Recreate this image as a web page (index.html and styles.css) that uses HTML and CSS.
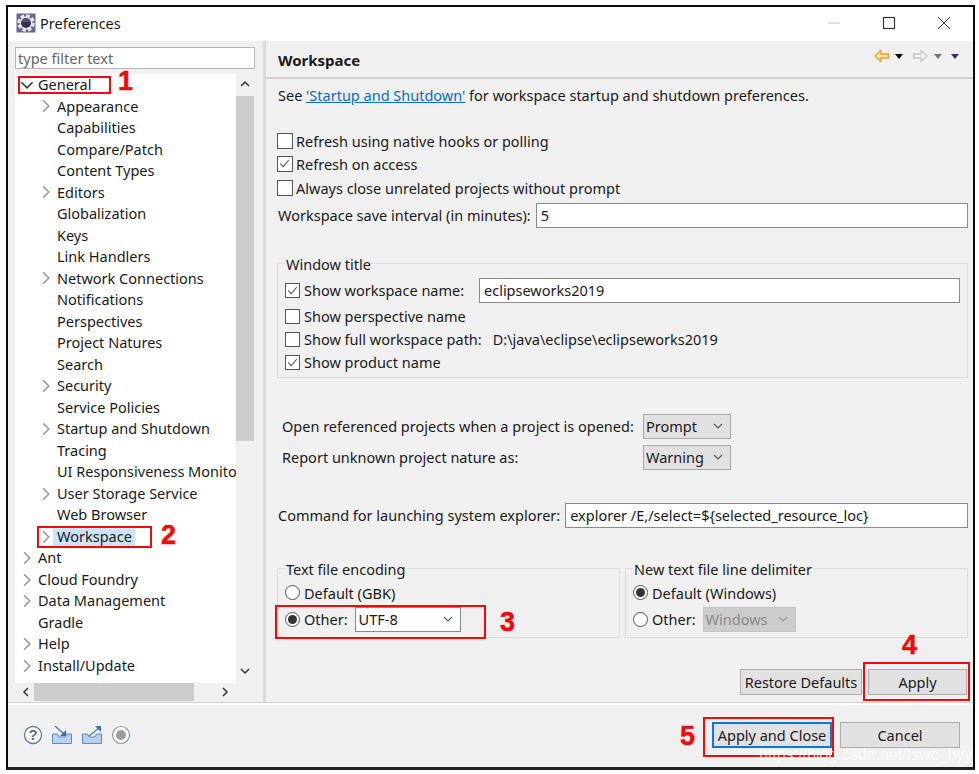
FILE: index.html
```html
<!DOCTYPE html>
<html lang="en">
<head>
<meta charset="utf-8">
<title>Preferences</title>
<link rel="stylesheet" href="styles.css">
</head>
<body>
<div class="window">
  <header class="titlebar">
    <svg class="app-icon" width="20" height="20" viewBox="0 0 20 20"><rect x="0.500" y="0.500" width="19" height="19" fill="#6a6596"/><circle cx="10" cy="10" r="7" fill="none" stroke="#e6e6ee" stroke-width="3.600" stroke-dasharray="3.500 2"/><circle cx="10" cy="10" r="6.500" fill="#eeeef2"/><circle cx="10" cy="10" r="5" fill="#35304f"/><path d="M5.500 9a4.800 4.800 0 0 1 9 0z" fill="#55507a"/></svg>
    <span class="title-text">Preferences</span>
    <div class="win-controls">
      <svg width="14" height="14" viewBox="0 0 14 14"><path d="M1 7h12" stroke="#c4c4c4" fill="none"/></svg>
      <svg width="14" height="14" viewBox="0 0 14 14"><rect x="1.500" y="1.500" width="11" height="11" stroke="#333" fill="none" stroke-width="1.200"/></svg>
      <svg width="14" height="14" viewBox="0 0 14 14"><path d="M1 1l12 12M13 1L1 13" stroke="#333" fill="none"/></svg>
    </div>
  </header>
  <div class="main">
    <aside class="left">
      <input class="filter" value="type filter text">
      <div class="tree-box">
        <ul class="tree">
          <li class="root"><svg class="tw open" viewBox="0 0 10 10"><path d="M1 3l4 4 4-4" /></svg>General</li>
          <li class="sub"><svg class="tw" viewBox="0 0 10 10"><path d="M3 1l4 4-4 4"/></svg>Appearance</li>
          <li class="sub leaf">Capabilities</li>
          <li class="sub leaf">Compare/Patch</li>
          <li class="sub leaf">Content Types</li>
          <li class="sub"><svg class="tw" viewBox="0 0 10 10"><path d="M3 1l4 4-4 4"/></svg>Editors</li>
          <li class="sub leaf">Globalization</li>
          <li class="sub leaf">Keys</li>
          <li class="sub leaf">Link Handlers</li>
          <li class="sub"><svg class="tw" viewBox="0 0 10 10"><path d="M3 1l4 4-4 4"/></svg>Network Connections</li>
          <li class="sub leaf">Notifications</li>
          <li class="sub leaf">Perspectives</li>
          <li class="sub leaf">Project Natures</li>
          <li class="sub leaf">Search</li>
          <li class="sub"><svg class="tw" viewBox="0 0 10 10"><path d="M3 1l4 4-4 4"/></svg>Security</li>
          <li class="sub leaf">Service Policies</li>
          <li class="sub"><svg class="tw" viewBox="0 0 10 10"><path d="M3 1l4 4-4 4"/></svg>Startup and Shutdown</li>
          <li class="sub leaf">Tracing</li>
          <li class="sub leaf">UI Responsiveness Monitoring</li>
          <li class="sub"><svg class="tw" viewBox="0 0 10 10"><path d="M3 1l4 4-4 4"/></svg>User Storage Service</li>
          <li class="sub leaf">Web Browser</li>
          <li class="sub"><svg class="tw" viewBox="0 0 10 10"><path d="M3 1l4 4-4 4"/></svg><span class="selected">Workspace</span></li>
          <li class="root"><svg class="tw" viewBox="0 0 10 10"><path d="M3 1l4 4-4 4"/></svg>Ant</li>
          <li class="root"><svg class="tw" viewBox="0 0 10 10"><path d="M3 1l4 4-4 4"/></svg>Cloud Foundry</li>
          <li class="root"><svg class="tw" viewBox="0 0 10 10"><path d="M3 1l4 4-4 4"/></svg>Data Management</li>
          <li class="root leaf">Gradle</li>
          <li class="root"><svg class="tw" viewBox="0 0 10 10"><path d="M3 1l4 4-4 4"/></svg>Help</li>
          <li class="root"><svg class="tw" viewBox="0 0 10 10"><path d="M3 1l4 4-4 4"/></svg>Install/Update</li>
        </ul>
        <div class="vscroll">
          <svg class="sb-arrow" viewBox="0 0 10 10"><path d="M1 7l4-4 4 4"/></svg>
          <div class="vtrack"><div class="vthumb"></div></div>
          <svg class="sb-arrow" viewBox="0 0 10 10"><path d="M1 3l4 4 4-4"/></svg>
        </div>
      </div>
      <div class="hscroll">
        <svg class="sb-arrow" viewBox="0 0 10 10"><path d="M7 1L3 5l4 4"/></svg>
        <div class="htrack"><div class="hthumb"></div></div>
        <svg class="sb-arrow" viewBox="0 0 10 10"><path d="M3 1l4 4-4 4"/></svg>
      </div>
    </aside>
    <section class="right">
      <div class="page-head">
        <h1>Workspace</h1>
        <div class="nav-icons">
          <svg class="nav-back" width="16" height="14" viewBox="0 0 16 14"><path d="M1 7l6-5.500V5h7.500v4H7v3.500z" fill="#fde89a" stroke="#dca23c" stroke-width="1.300"/></svg>
          <i class="tri black"></i>
          <svg class="nav-fwd" width="16" height="14" viewBox="0 0 16 14"><path d="M15 7L9 1.500V5H1.500v4H9v3.500z" fill="#f4f4f4" stroke="#c8c8c8" stroke-width="1.300"/></svg>
          <i class="tri grey"></i>
          <i class="tri purple"></i>
        </div>
      </div>
      <div class="page">
        <p class="see">See <a href="#">'Startup and Shutdown'</a> for workspace startup and shutdown preferences.</p>
        <div class="checks first">
          <label class="cb-row"><span class="cb"></span>Refresh using native hooks or polling</label>
          <label class="cb-row"><span class="cb on"><svg viewBox="0 0 14 14"><path d="M2.500 7l3 3.500 6-7"/></svg></span>Refresh on access</label>
          <label class="cb-row"><span class="cb"></span>Always close unrelated projects without prompt</label>
        </div>
        <div class="field-row save"><span>Workspace save interval (in minutes):</span><div class="text-input grow">5</div></div>

        <fieldset class="group wt">
          <legend>Window title</legend>
          <div class="field-row name">
            <label class="cb-row w"><span class="cb on"><svg viewBox="0 0 14 14"><path d="M2.500 7l3 3.500 6-7"/></svg></span>Show workspace name:</label>
            <div class="text-input grow">eclipseworks2019</div>
          </div>
          <label class="cb-row"><span class="cb"></span>Show perspective name</label>
          <label class="cb-row"><span class="cb"></span>Show full workspace path:<span class="path">D:\java\eclipse\eclipseworks2019</span></label>
          <label class="cb-row"><span class="cb on"><svg viewBox="0 0 14 14"><path d="M2.500 7l3 3.500 6-7"/></svg></span>Show product name</label>
        </fieldset>

        <div class="combo-rows">
          <div class="combo-row"><span class="combo-label">Open referenced projects when a project is opened:</span><div class="combo c88">Prompt<svg viewBox="0 0 10 10"><path d="M1 3l4 4 4-4"/></svg></div></div>
          <div class="combo-row"><span class="combo-label">Report unknown project nature as:</span><div class="combo c88">Warning<svg viewBox="0 0 10 10"><path d="M1 3l4 4 4-4"/></svg></div></div>
        </div>

        <div class="field-row cmd"><span>Command for launching system explorer:</span><div class="text-input grow">explorer /E,/select=${selected_resource_loc}</div></div>

        <div class="enc-groups">
          <fieldset class="group enc">
            <legend>Text file encoding</legend>
            <label class="rb-row"><span class="rb"></span>Default (GBK)</label>
            <label class="rb-row"><span class="rb on"></span>Other:<div class="combo c118">UTF-8<svg viewBox="0 0 10 10"><path d="M1 3l4 4 4-4"/></svg></div></label>
          </fieldset>
          <fieldset class="group enc">
            <legend>New text file line delimiter</legend>
            <label class="rb-row"><span class="rb on"></span>Default (Windows)</label>
            <label class="rb-row"><span class="rb"></span>Other:<div class="combo c93 disabled">Windows<svg viewBox="0 0 10 10"><path d="M1 3l4 4 4-4"/></svg></div></label>
          </fieldset>
        </div>

        <div class="page-buttons">
          <button class="btn restore">Restore Defaults</button>
          <button class="btn apply">Apply</button>
        </div>
      </div>
    </section>
  </div>
  <footer class="bottom">
    <div class="bottom-icons">
      <svg width="20" height="20" viewBox="0 0 20 20"><circle cx="10" cy="10" r="8.500" fill="#fff" stroke="#5f7f9f" stroke-width="1.300"/><text x="10" y="15" text-anchor="middle" class="q">?</text></svg>
      <svg width="22" height="20" viewBox="0 0 22 20"><path d="M1.500 9v9.500h19V9h-5l-1.500 3H8L6.500 9z" fill="#b9d1ea" stroke="#5d8bbd"/><path d="M4 1l9 8" stroke="#4f8cc0" stroke-width="1.600" fill="none"/><path d="M15 5v6H9z" fill="#3f6f9f"/></svg>
      <svg width="22" height="20" viewBox="0 0 22 20"><path d="M1.500 9v9.500h19V9h-5l-1.500 3H8L6.500 9z" fill="#b9d1ea" stroke="#5d8bbd"/><path d="M8 11l10-8" stroke="#4f8cc0" stroke-width="1.600" fill="none"/><path d="M14 1h6v6z" fill="#3f6f9f"/></svg>
      <svg width="20" height="20" viewBox="0 0 20 20"><circle cx="10" cy="10" r="8.500" fill="#fff" stroke="#8a98a8" stroke-width="1.200"/><circle cx="10" cy="10" r="5" fill="#9c9c9c"/></svg>
    </div>
    <div class="bottom-buttons">
      <button class="btn default">Apply and Close</button>
      <button class="btn cancel">Cancel</button>
    </div>
  </footer>
</div>

<div class="mark m-general"></div><b class="num n1">1</b>
<div class="mark m-workspace"></div><b class="num n2">2</b>
<div class="mark m-other"></div><b class="num n3">3</b>
<div class="mark m-apply"></div><b class="num n4">4</b>
<div class="mark m-close"></div><b class="num n5">5</b>
<div class="watermark">https://blog.csdn.net/tswc_byy</div>
</body>
</html>
```
FILE: styles.css
```css
* { box-sizing: border-box; }
html, body { margin: 0; height: 100%; background: #fff; }
body { position: relative; width: 979px; height: 774px; overflow: hidden; font-family: "Noto Sans", "Open Sans", sans-serif; font-size: 14.5px; color: #1a1a1a; }
.window { position: absolute; left: 6px; top: 5px; width: 969px; height: 765px; border: 2px solid #0a0a0a; border-bottom: 3px solid #222; display: flex; flex-direction: column; background: #f0f0f0; }
.titlebar { height: 34px; flex: none; background: #fff; display: flex; align-items: center; padding: 0 0 2px 8px; }
.app-icon { margin-right: 4px; }
.title-text { font-size: 14.5px; }
.win-controls { margin-left: auto; display: flex; gap: 41px; padding-right: 22px; align-items: center; }
.main { flex: 1; display: flex; min-height: 0; }
.left { width: 258px; flex: none; padding: 6px 9px 0 7px; border-right: 3px solid #d9d9d9; display: flex; flex-direction: column; }
.filter { width: 240px; height: 22px; border: 1px solid #b5b5b5; background: #fff; color: #666; font: inherit; padding: 0 2px; flex: none; }
.tree-box { margin-top: 5px; height: 609px; display: flex; background: #fff; flex: none; }
.tree { list-style: none; margin: 0; padding: 0; width: 222px; overflow: hidden; white-space: nowrap; }
.tree li { height: 21.520px; line-height: 21.520px; display: flex; align-items: center; }
.root { padding-left: 5px; }
.sub { padding-left: 24px; }
.root.leaf { padding-left: 23px; }
.sub.leaf { padding-left: 42px; }
.tw { width: 14px; height: 14px; margin-right: 4px; flex: none; fill: none; stroke: #9a9a9a; stroke-width: 1.100; }
.tw.open { stroke: #333; }
.selected { background: #cce4f7; padding: 0 3px 0 4px; margin-left: -4px; height: 19px; line-height: 19px; }
.vscroll { width: 18px; background: #f0f0f0; display: flex; flex-direction: column; }
.sb-arrow { width: 10px; height: 10px; flex: none; fill: none; stroke: #333; stroke-width: 1.500; }
.vscroll .sb-arrow { margin: 5px 4px 7px; }
.vtrack { flex: 1; }
.vthumb { height: 345px; background: #cdcdcd; }
.hscroll { height: 18px; display: flex; background: #f0f0f0; align-items: center; flex: none; width: 222px; padding-left: 3px; }
.htrack { flex: 1; height: 18px; }
.hthumb { width: 160px; height: 18px; background: #cdcdcd; }
.hscroll .sb-arrow { margin: 0 3px 0 3px; }
.hscroll .htrack + .sb-arrow { margin: 0 7px 0 0; }
.right { flex: 1; min-width: 0; display: flex; flex-direction: column; }
.page-head { height: 38px; flex: none; display: flex; align-items: center; border-bottom: 2px solid #d0d0d0; padding: 0 14px 0 12px; }
h1 { margin: 0; padding-top: 2px; font-size: 15px; font-weight: 700; }
.nav-icons { margin-left: auto; display: flex; align-items: center; padding-bottom: 6px; }
.tri { display: block; width: 0; height: 0; border-left: 4.500px solid transparent; border-right: 4.500px solid transparent; border-top: 5px solid #000; margin-left: 5px; }
.tri.grey { border-top-color: #777; margin-left: 6px; }
.tri.purple { border-top-color: #3d2a78; margin-left: 9px; }
.nav-fwd { margin-left: 9px; }
.page { flex: 1; padding: 5px 5px 0 11px; display: flex; flex-direction: column; }
.see { margin: 0; height: 22px; line-height: 22px; padding-left: 1px; }
a { color: #0a6cc4; }
.checks.first { margin-top: 23px; }
.cb-row { display: flex; align-items: center; height: 23.500px; white-space: nowrap; }
.checks .cb { width: 16px; height: 16px; margin-right: 3px; }
.cb { width: 15px; height: 15px; border: 1px solid #555; background: #fff; margin-right: 4px; flex: none; display: block; }
.cb svg { display: block; width: 13px; height: 13px; fill: none; stroke: #444; stroke-width: 1.200; }
.field-row { display: flex; align-items: center; white-space: nowrap; }
.field-row.save { margin-top: 3px; gap: 5px; }
.field-row.save > span, .field-row.cmd > span { padding-left: 1px; }
.text-input { height: 25px; line-height: 23px; border: 1px solid #8a8a8a; background: #fff; padding: 0 4px; }
.grow { flex: 1; }
.group { margin: 0; padding: 0; border: 1px solid #dcdcdc; min-width: 0; }
.group legend { padding: 0 1px; margin-left: 0; line-height: 20px; }
.wt { margin-top: 26px; padding: 5px 7px 0 7px; height: 124px; }
.field-row.name { height: 25px; margin-top: -1px; }
.field-row.name .w { width: 194px; }
.path { margin-left: 11px; }
.wt .field-row.name + .cb-row { margin-top: 2px; }
.wt .cb-row + .cb-row { margin-top: -0.500px; }
.combo-rows { margin-top: 36px; display: flex; flex-direction: column; gap: 6px; padding-left: 5px; }
.combo-row { display: flex; align-items: center; }
.combo-label { width: 361px; white-space: nowrap; }
.combo { height: 25px; border: 1px solid #a8a8a8; background: #e1e1e1; display: flex; align-items: center; padding: 0 4px 0 2px; justify-content: space-between; white-space: nowrap; }
.combo svg { width: 10px; height: 10px; fill: none; stroke: #555; stroke-width: 1.100; margin-right: 3px; }
.c88 { width: 88px; }
.c118 { width: 106px; background: #fff; margin-left: 7px; border-color: #8a8a8a; padding-left: 3px; }
.c93 { width: 93px; margin-left: 7px; }
.disabled { color: #888; background: #ccc; border-color: #c4c4c4; }
.disabled svg { stroke: #999; }
.field-row.cmd { margin-top: 33px; gap: 5px; }
.enc-groups { margin-top: 31px; display: grid; grid-template-columns: 343px 343px; gap: 5px; }
.enc { padding: 2px 0 0 7px; height: 79px; }
.rb-row { display: flex; align-items: center; height: 24px; white-space: nowrap; }
.rb-row + .rb-row { height: 27px; margin-top: 1px; }
.rb { width: 15px; height: 15px; border-radius: 50%; border: 1px solid #555; background: #fff; margin-right: 4px; flex: none; display: block; }
.rb.on::after { content: ""; display: block; width: 9px; height: 9px; border-radius: 50%; background: #333; margin: 2px; }
.page-buttons { margin-top: 31px; display: flex; justify-content: flex-end; gap: 6px; padding-right: 1px; }
.btn { height: 26px; border: 1px solid #adadad; background: #e1e1e1; font: inherit; color: #1a1a1a; padding: 0; }
.restore { width: 122px; }
.apply { width: 99px; }
.bottom { height: 64px; flex: none; border-top: 2px solid #fff; box-shadow: 0 -1px 0 #d0d0d0; display: flex; align-items: center; padding: 0 13px 0 15px; justify-content: space-between; }
.bottom-icons { display: flex; gap: 8px; align-items: center; margin-top: -2px; }
.q { font-family: "Liberation Sans", sans-serif; font-size: 15px; font-weight: 700; fill: #55708c; }
.bottom-buttons { display: flex; gap: 8px; margin-top: -2px; }
.default { width: 120px; border: 2px solid #0a78d7; }
.cancel { width: 120px; }
.mark { position: absolute; border: 2px solid #f00a0a; }
.m-general { left: 18px; top: 76px; width: 93px; height: 18px; }
.m-workspace { left: 37px; top: 526px; width: 115px; height: 22px; }
.m-other { left: 275px; top: 605px; width: 211px; height: 34px; }
.m-apply { left: 863px; top: 662px; width: 107px; height: 39px; }
.m-close { left: 703px; top: 717px; width: 131px; height: 40px; }
.num { position: absolute; color: #f00a0a; font-family: "Liberation Sans", sans-serif; font-size: 27px; font-weight: 700; line-height: 1; -webkit-text-stroke: 0.5px #f00a0a; }
.n1 { left: 118px; top: 68px; }
.n2 { left: 161px; top: 522px; }
.n3 { left: 500px; top: 609px; }
.n4 { left: 902px; top: 632px; }
.n5 { left: 680px; top: 723px; }
.watermark { position: absolute; left: 759px; top: 746px; font-family: "Liberation Sans", sans-serif; font-size: 16px; color: rgba(255,255,255,.7); white-space: nowrap; }
```
